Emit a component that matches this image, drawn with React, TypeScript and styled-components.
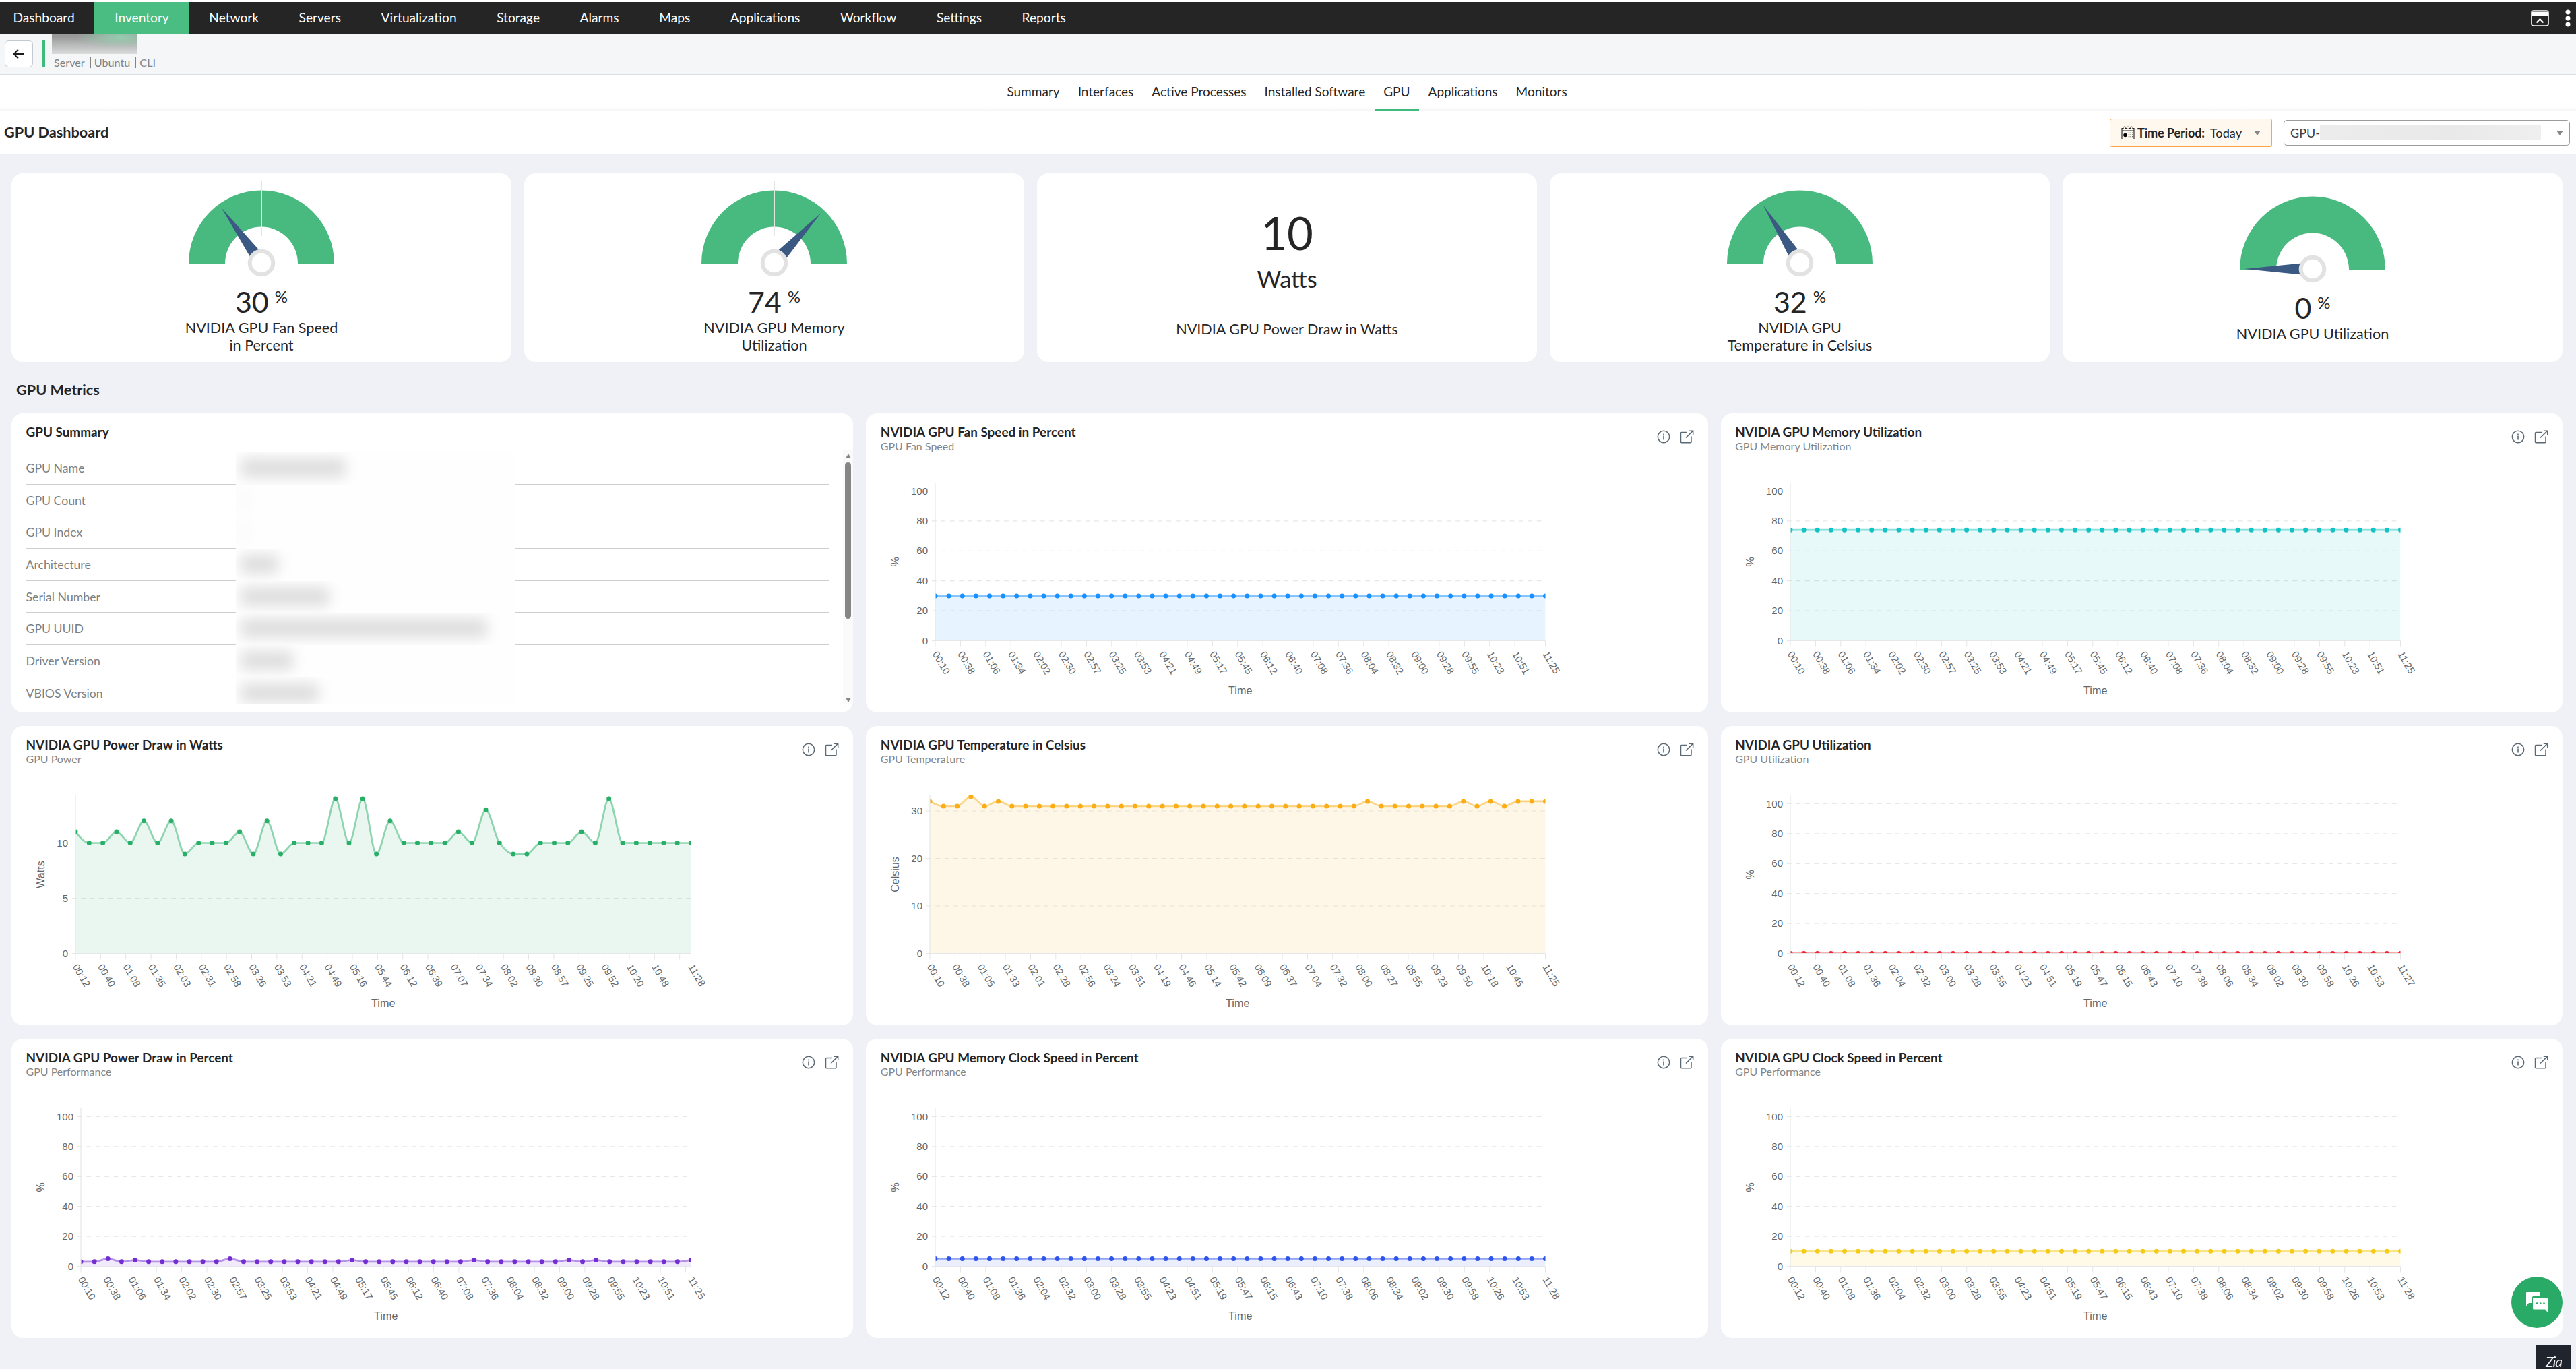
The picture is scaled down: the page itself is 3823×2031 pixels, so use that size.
import styled, { createGlobalStyle } from 'styled-components'

const GlobalStyle = createGlobalStyle`
  * {
    box-sizing: border-box;
  }
  body {
    margin: 0;
    background: #f0f1f6;
    font-family: Lato, 'Liberation Sans', sans-serif;
    color: #252525;
  }
`

const SPage = styled.div`
  height: 2031px;
  overflow: hidden;
  display: flex;
  flex-direction: column;
`

const STopLine = styled.div`
  height: 3px;
  flex: none;
  border-top: 1px solid #fff;
  border-bottom: 1px solid #fff;
  background: #b9bdc0;
`

const SNav = styled.nav`
  height: 47px;
  flex: none;
  background: #252525;
  display: flex;
  align-items: stretch;
  justify-content: space-between;
`

const SNavList = styled.div`
  display: flex;
`

const SNavItem = styled.a<{ $active?: boolean; $first?: boolean }>`
  display: flex;
  align-items: center;
  padding: 0 29.8px 2px ${(p) => (p.$first ? '19.5px' : '29.8px')};
  font-size: 19.15px;
  color: #fff;
  background: ${(p) => (p.$active ? '#4abd82' : 'transparent')};
`

const SNavTools = styled.div`
  display: flex;
  align-items: center;
  gap: 24px;
  padding-right: 8px;
`

const SHostBar = styled.header`
  height: 61px;
  flex: none;
  background: #f5f6f8;
  border-bottom: 1px solid #dcdee1;
  display: flex;
  padding-left: 7px;
`

const SBackButton = styled.button`
  width: 42px;
  height: 40px;
  margin-top: 10px;
  padding: 0;
  background: #fff;
  border: 1px solid #c3cad1;
  border-radius: 6px;
  display: flex;
  align-items: center;
  justify-content: center;
`

const SAccent = styled.div`
  width: 4px;
  height: 40px;
  margin: 10px 10px 0 14px;
  background: #3fbb7d;
`

const SHostInfo = styled.div`
  padding-top: 1px;
`

const SHostName = styled.div`
  width: 127px;
  height: 29px;
  background: radial-gradient(
      ellipse at 80% 15%,
      rgba(150, 208, 176, 0.95),
      rgba(150, 208, 176, 0) 45%
    ),
    linear-gradient(#989898 10%, #dadbdb);
`

const SHostMeta = styled.div`
  display: flex;
  margin: 4px 0 0 3px;
  font-size: 16.2px;
  line-height: 18px;
  color: #818588;

  span + span {
    margin-left: 8px;
    padding-left: 5px;
    border-left: 1px solid #818588;
    line-height: 18px;
    height: 17px;
  }
`

const STabs = styled.div`
  height: 54px;
  flex: none;
  background: linear-gradient(#fff 90%, #f6f6f6);
  border-bottom: 1px solid #cacaca;
  display: flex;
  justify-content: center;
  padding-right: 3px;
`

const STab = styled.a<{ $active?: boolean }>`
  display: flex;
  align-items: center;
  padding: 0 13.5px 2px;
  font-size: 19.05px;
  border-bottom: 3px solid ${(p) => (p.$active ? '#3fbb7d' : 'transparent')};
`

const STitleBar = styled.div`
  height: 64px;
  flex: none;
  background: #fff;
  display: flex;
  align-items: center;
  justify-content: space-between;
  padding: 0 9px 0 6px;
`

const SHeading = styled.h1`
  margin: 0;
  font-size: 21.7px;
  line-height: 28px;
  font-weight: 700;
`

const SPageTitle = styled(SHeading)`
  padding-bottom: 2px;
`

const SFilters = styled.div`
  display: flex;
  align-items: center;
  gap: 17px;
`

const SPeriod = styled.div`
  width: 241px;
  height: 42px;
  border: 1px solid #ffa53d;
  border-radius: 3px;
  background: #fff8ee;
  display: flex;
  align-items: center;
  padding: 0 16px;
  font-size: 18.2px;

  b {
    margin: 0 8px 0 4px;
    letter-spacing: -0.2px;
  }
`

const SSelect = styled.div`
  width: 425px;
  height: 38px;
  border: 1px solid #9c9c9c;
  border-radius: 5px;
  display: flex;
  align-items: center;
  padding: 0 9px;
  font-size: 18px;
  color: #3c3c3c;
`

const SMasked = styled.div`
  width: 328px;
  height: 22px;
  background: linear-gradient(90deg, #ececec, #e9e9e9 60%, #efefef);
`

const SCaret = styled.i`
  margin-left: auto;
  border: 5px solid transparent;
  border-top: 7px solid #868686;
  border-bottom: 0;
`

const SStatRow = styled.section`
  margin: 28px 20px 0 17px;
  display: grid;
  grid-template-columns: repeat(5, 1fr);
  gap: 19px;
`

const SCard = styled.div`
  background: #fff;
  border-radius: 17px;
  overflow: hidden;
`

const SStatCard = styled(SCard)<{ $top: number }>`
  height: 280px;
  padding-top: ${(p) => p.$top}px;
  display: flex;
  flex-direction: column;
  align-items: center;
  text-align: center;
`

const SGaugeValue = styled.div`
  display: flex;
  align-items: flex-start;
  margin-top: 8px;
  font-size: 43px;
  line-height: 50px;

  sup {
    margin-left: 9px;
    font-size: 24px;
    line-height: 33px;
  }
`

const SStatLabel = styled.div`
  font-size: 21.6px;
  line-height: 26px;
  white-space: pre-line;
`

const SBigValue = styled.div`
  font-size: 67px;
  line-height: 80px;
`

const SBigUnit = styled.div`
  margin: 7px 0 39px;
  font-size: 34.5px;
  line-height: 44px;
`

const SMetricsTitle = styled(SHeading)`
  margin: 27px 0 21px 24px;
`

const SMetricsGrid = styled.section`
  margin: 0 20px 0 17px;
  display: grid;
  grid-template-columns: repeat(3, 1fr);
  grid-auto-rows: 444px;
  gap: 20px 19px;
`

const SCardHead = styled.div`
  height: 60px;
  padding: 16px 21px 0 21.5px;
  display: flex;
  justify-content: space-between;
`

const SCardTitle = styled.div`
  font-size: 18.9px;
  line-height: 23px;
  font-weight: 700;
`

const SCardSub = styled.div`
  font-size: 16px;
  line-height: 19px;
  color: #83878a;
`

const SCardTools = styled.div`
  display: flex;
  gap: 14px;
  padding-top: 9px;
`

const SSummaryBody = styled.div`
  margin-top: -5px;
  height: 377px;
  display: flex;
`

const SSummaryRows = styled.div`
  flex: 1;
  padding: 3px 21px 0 21.5px;
  overflow: hidden;
`

const SSummaryRow = styled.div`
  height: 47.7px;
  display: flex;
  border-bottom: 1px solid #cfcfcf;
  font-size: 17.7px;
  line-height: 48px;
  color: #7b7f82;
`

const SSummaryLabel = styled.div`
  width: 311px;
`

const SSummaryMask = styled.div`
  width: 415px;
  height: 48px;
  background: #fefefe;
  overflow: hidden;
  padding: 9px 0 0 7px;
`

const SSmudge = styled.div<{ $w: number; $faint?: boolean }>`
  width: ${(p) => p.$w}px;
  height: 28px;
  border-radius: 8px;
  background: ${(p) => (p.$faint ? '#f3f3f3' : '#dddddd')};
  filter: blur(10px);
`

const SScroll = styled.div`
  width: 15px;
  background: #fafafa;
  display: flex;
  flex-direction: column;
  align-items: center;
  padding: 5px 0 3px;
`

const SScrollThumb = styled.div`
  width: 9px;
  height: 232px;
  margin: 6px 0 auto;
  border-radius: 5px;
  background: #868686;
`

const SArrow = styled.i<{ $up?: boolean }>`
  border: 4.5px solid transparent;
  border-top: ${(p) => (p.$up ? '0' : '7px solid #868686')};
  border-bottom: ${(p) => (p.$up ? '7px solid #868686' : '0')};
`

const SChat = styled.button`
  position: fixed;
  left: 3727px;
  top: 1894px;
  width: 76px;
  height: 76px;
  padding: 0;
  border: 0;
  border-radius: 50%;
  background: #29ab67;
  display: flex;
  align-items: center;
  justify-content: center;
`

const SZia = styled.div`
  position: fixed;
  left: 3764px;
  top: 1995px;
  width: 52px;
  height: 36px;
  background: #20242c;
  border-top: 1px solid #8b8d90;
  color: #f2f2f2;
  font-size: 21px;
  font-style: italic;
  line-height: 48px;
  text-align: center;
  letter-spacing: -1px;

  &::before {
    content: '';
    position: absolute;
    left: 0;
    right: 0;
    top: 5px;
    border-top: 1px dotted #5c6065;
  }
`

const navItems = [
  'Dashboard',
  'Inventory',
  'Network',
  'Servers',
  'Virtualization',
  'Storage',
  'Alarms',
  'Maps',
  'Applications',
  'Workflow',
  'Settings',
  'Reports',
]

const tabs = [
  'Summary',
  'Interfaces',
  'Active Processes',
  'Installed Software',
  'GPU',
  'Applications',
  'Monitors',
]

const summaryRows = [
  { label: 'GPU Name', w: 156 },
  { label: 'GPU Count', w: 8, faint: true },
  { label: 'GPU Index', w: 8, faint: true },
  { label: 'Architecture', w: 56 },
  { label: 'Serial Number', w: 132 },
  { label: 'GPU UUID', w: 366 },
  { label: 'Driver Version', w: 78 },
  { label: 'VBIOS Version', w: 116 },
]

const POINTS = 46

// a flat series with a few samples that differ
const series = (base: number, diff: Record<number, number> = {}) =>
  Array.from({ length: POINTS }, (_, i) => diff[i] ?? base)

const timesA =
  '00:10 00:38 01:06 01:34 02:02 02:30 02:57 03:25 03:53 04:21 04:49 05:17 05:45 06:12 06:40 07:08 07:36 08:04 08:32 09:00 09:28 09:55 10:23 10:51 11:25'
const timesB =
  '00:12 00:40 01:08 01:36 02:04 02:32 03:00 03:28 03:55 04:23 04:51 05:19 05:47 06:15 06:43 07:10 07:38 08:06 08:34 09:02 09:30 09:58 10:26 10:53'
const timesWatts =
  '00:12 00:40 01:08 01:35 02:03 02:31 02:58 03:26 03:53 04:21 04:49 05:16 05:44 06:12 06:39 07:07 07:34 08:02 08:30 08:57 09:25 09:52 10:20 10:48 11:28'
const timesTemp =
  '00:10 00:38 01:05 01:33 02:01 02:28 02:56 03:24 03:51 04:19 04:46 05:14 05:42 06:09 06:37 07:04 07:32 08:00 08:27 08:55 09:23 09:50 10:18 10:45 11:25'

interface IChart {
  title: string
  sub: string
  unit: string
  color: string
  data: number[]
  times: string
  ticks: number[]
  perUnit: number
  left: number
  step: number
}

const percent = {
  unit: '%',
  ticks: [0, 20, 40, 60, 80, 100],
  perUnit: 2.22,
  left: 103,
  step: 0.0413,
}

const charts: IChart[] = [
  {
    ...percent,
    title: 'NVIDIA GPU Fan Speed in Percent',
    sub: 'GPU Fan Speed',
    color: '#1890ff',
    data: series(30),
    times: timesA,
  },
  {
    ...percent,
    title: 'NVIDIA GPU Memory Utilization',
    sub: 'GPU Memory Utilization',
    color: '#13c2c2',
    data: series(74),
    times: timesA,
  },
  {
    title: 'NVIDIA GPU Power Draw in Watts',
    sub: 'GPU Power',
    unit: 'Watts',
    color: '#27ae67',
    data: [
      11, 10, 10, 11, 10, 12, 10, 12, 9, 10, 10, 10, 11, 9, 12, 9, 10, 10, 10,
      14, 10, 14, 9, 12, 10, 10, 10, 10, 11, 10, 13, 10, 9, 9, 10, 10, 10, 11,
      10, 14, 10, 10, 10, 10, 10, 10,
    ],
    times: timesWatts,
    ticks: [0, 5, 10],
    perUnit: 16.4,
    left: 95,
    step: 0.0409,
  },
  {
    title: 'NVIDIA GPU Temperature in Celsius',
    sub: 'GPU Temperature',
    unit: 'Celsius',
    color: '#faad14',
    data: series(31, {
      0: 32, 3: 33, 5: 32, 32: 32, 39: 32, 41: 32, 43: 32, 44: 32, 45: 32,
    }),
    times: timesTemp,
    ticks: [0, 10, 20, 30],
    perUnit: 7.05,
    left: 95,
    step: 0.0409,
  },
  {
    ...percent,
    title: 'NVIDIA GPU Utilization',
    sub: 'GPU Utilization',
    color: '#f5222d',
    data: series(0),
    times: timesB + ' 11:27',
  },
  {
    ...percent,
    title: 'NVIDIA GPU Power Draw in Percent',
    sub: 'GPU Performance',
    color: '#722ed1',
    data: series(3, { 2: 5, 4: 4, 11: 5, 20: 4, 29: 4, 36: 4, 38: 4, 45: 4 }),
    times: timesA,
  },
  {
    ...percent,
    title: 'NVIDIA GPU Memory Clock Speed in Percent',
    sub: 'GPU Performance',
    color: '#2f54eb',
    data: series(5),
    times: timesB + ' 11:28',
  },
  {
    ...percent,
    title: 'NVIDIA GPU Clock Speed in Percent',
    sub: 'GPU Performance',
    color: '#f5cb18',
    data: series(10),
    times: timesB + ' 11:28',
  },
]

const RIGHT = 1008.5
const TOP = 103
const BOTTOM = 337.5

// monotone cubic through the points, so peaks never overshoot
const curve = (pts: number[][]) => {
  const n = pts.length
  const dx = pts[1][0] - pts[0][0]
  const slope = pts.slice(1).map((p, i) => (p[1] - pts[i][1]) / dx)
  const tan = pts.map((_, i) => {
    if (i === 0) return slope[0] * 1.5
    if (i === n - 1) return slope[n - 2]
    const a = slope[i - 1]
    const b = slope[i]
    return a * b <= 0 ? 0 : (2 * a * b) / (a + b)
  })
  return pts
    .map((p, i) => {
      if (i === 0) return `M${p[0]} ${p[1]}`
      const q = pts[i - 1]
      return `C${q[0] + dx / 3} ${q[1] + (tan[i - 1] * dx) / 3} ${
        p[0] - dx / 3
      } ${p[1] - (tan[i] * dx) / 3} ${p[0]} ${p[1]}`
    })
    .join('')
}

const AreaChart = ({ chart, id }: { chart: IChart; id: string }) => {
  const { left, color } = chart
  const width = RIGHT - left
  const y = (v: number) => BOTTOM - v * chart.perUnit
  const pts = chart.data.map((v, i) => [
    left + (i * width) / (POINTS - 1),
    y(v),
  ])
  const line = curve(pts)
  const times = chart.times.split(' ')
  const tickX = Array.from({ length: 25 }, (_, i) => left + i * chart.step * width)

  return (
    <svg
      width="1249"
      height="384"
      viewBox="0 60 1249 384"
      fontFamily="'Liberation Sans', Arial, sans-serif"
      fill="#62676c"
    >
      <clipPath id={id}>
        <rect x={left} y={TOP} width={width} height={BOTTOM - TOP} />
      </clipPath>
      {chart.ticks.map((t) => (
        <g key={t}>
          <line
            x1={left - 5}
            x2={t ? RIGHT : left}
            y1={y(t)}
            y2={y(t)}
            stroke="#e6e7e8"
            strokeWidth="1.2"
            strokeDasharray={t ? '6.7 6.7' : undefined}
          />
          <text x={left - 11} y={y(t) + 5} fontSize="15" textAnchor="end">
            {t}
          </text>
        </g>
      ))}
      <g clipPath={`url(#${id})`}>
        <path
          d={`${line}L${RIGHT} ${BOTTOM}L${left} ${BOTTOM}Z`}
          fill={color}
          fillOpacity="0.1"
        />
        <path
          d={line}
          fill="none"
          stroke={color}
          strokeOpacity="0.5"
          strokeWidth="2.7"
        />
        {pts.map((p, i) => (
          <circle key={i} cx={p[0]} cy={p[1]} r="3.5" fill={color} />
        ))}
      </g>
      <path
        d={`M${left} ${TOP}V${BOTTOM}H${RIGHT}`}
        fill="none"
        stroke="#e6e7e8"
        strokeWidth="1.2"
      />
      {[...tickX, RIGHT].map((x) => (
        <line key={x} x1={x} x2={x} y1={BOTTOM} y2={BOTTOM + 9} stroke="#e3e5e7" />
      ))}
      {times.map((t, i) => {
        const x = (i === 24 ? RIGHT : tickX[i]) - 4.5
        return (
          <text key={t} fontSize="14.6" transform={`translate(${x} 357) rotate(60)`}>
            {t}
          </text>
        )
      })}
      <text x={(left + RIGHT) / 2} y="417" fontSize="16.2" textAnchor="middle">
        Time
      </text>
      <text
        fontSize="16"
        textAnchor="middle"
        transform={`translate(48.5 220.5) rotate(-90)`}
      >
        {chart.unit}
      </text>
    </svg>
  )
}

const InfoIcon = () => (
  <svg width="20" height="20" viewBox="0 0 20 20" fill="none" stroke="#5b6975">
    <circle cx="10" cy="10" r="8.7" strokeWidth="1.5" />
    <path d="M10 8.6V14.4" strokeWidth="1.6" />
    <path d="M10 5.4V7.2" strokeWidth="1.6" />
  </svg>
)

const OpenIcon = () => (
  <svg width="21" height="20" viewBox="0 0 21 20" fill="none" stroke="#5b6975">
    <path
      d="M11 3.5H2.6Q1.5 3.5 1.5 4.6V17.6Q1.5 18.7 2.6 18.7H15.8Q17 18.7 17 17.6V9.5"
      strokeWidth="1.5"
    />
    <path d="M9 11.5L19.3 1.4M13.8 1.2H19.7V7" strokeWidth="1.5" />
  </svg>
)

const ChartCard = ({ chart, id }: { chart: IChart; id: string }) => (
  <SCard>
    <SCardHead>
      <div>
        <SCardTitle>{chart.title}</SCardTitle>
        <SCardSub>{chart.sub}</SCardSub>
      </div>
      <SCardTools>
        <InfoIcon />
        <OpenIcon />
      </SCardTools>
    </SCardHead>
    <AreaChart chart={chart} id={id} />
  </SCard>
)

const Gauge = ({ value }: { value: number }) => (
  <svg width="260" height="146" viewBox="-130 -122 260 146">
    <path
      d="M-108 0A108 108.5 0 0 1 108 0H54A54 54.5 0 0 0 -54 0Z"
      fill="#48ba7f"
    />
    <path d="M0.5 -122V-41" stroke="#e4e6e4" strokeWidth="1" />
    <g transform={`translate(0 -1) rotate(${value * 1.8 - 180})`}>
      <path d="M16 -8.5L101 0L16 8.5Z" fill="#3b5982" />
    </g>
    <circle cy="-1" r="17.3" fill="#fff" stroke="#e2e2e2" strokeWidth="6" />
  </svg>
)

const GaugeCard = ({ value, label, top = 12 }: any) => (
  <SStatCard $top={top}>
    <Gauge value={value} />
    <SGaugeValue>
      {value}
      <sup>%</sup>
    </SGaugeValue>
    <SStatLabel>{label}</SStatLabel>
  </SStatCard>
)

const App = () => {
  return (
    <SPage>
      <GlobalStyle />
      <STopLine />
      <SNav>
        <SNavList>
          {navItems.map((name, i) => (
            <SNavItem key={name} $first={i === 0} $active={name === 'Inventory'}>
              {name}
            </SNavItem>
          ))}
        </SNavList>
        <SNavTools>
          <svg width="27" height="24" viewBox="0 0 27 24" fill="none">
            <rect x="1" y="1" width="25" height="22" rx="3" stroke="#fff" strokeWidth="1.6" />
            <path d="M1 2.5H26V8H1Z" fill="#fff" />
            <path d="M8.5 18.5L13.5 13.2L18.5 18.5" stroke="#fff" strokeWidth="2" />
          </svg>
          <svg width="8" height="26" viewBox="0 0 8 26" fill="#fff">
            <circle cx="4" cy="4" r="3.5" />
            <circle cx="4" cy="13" r="3.5" />
            <circle cx="4" cy="22" r="3.5" />
          </svg>
        </SNavTools>
      </SNav>

      <SHostBar>
        <SBackButton>
          <svg width="18" height="16" viewBox="0 0 18 16" fill="none" stroke="#1c1c1c">
            <path d="M17 8H2M8 1.5L1.5 8L8 14.5" strokeWidth="1.8" />
          </svg>
        </SBackButton>
        <SAccent />
        <SHostInfo>
          <SHostName />
          <SHostMeta>
            <span>Server</span>
            <span>Ubuntu</span>
            <span>CLI</span>
          </SHostMeta>
        </SHostInfo>
      </SHostBar>

      <STabs>
        {tabs.map((t) => (
          <STab key={t} $active={t === 'GPU'}>
            {t}
          </STab>
        ))}
      </STabs>

      <STitleBar>
        <SPageTitle>GPU Dashboard</SPageTitle>
        <SFilters>
          <SPeriod>
            <svg width="20" height="20" viewBox="0 0 20 20" fill="none" stroke="#222">
              <path d="M1 19V3.5H19V19M1 7H19" strokeWidth="1.1" />
              <circle cx="4.5" cy="2.8" r="1.7" fill="#fff8ee" />
              <circle cx="10" cy="2.8" r="1.7" fill="#fff8ee" />
              <circle cx="15.5" cy="2.8" r="1.7" fill="#fff8ee" />
              <circle cx="6" cy="13.5" r="2.8" fill="#000" stroke="none" />
              <path
                d="M11.5 9.5V18M14.3 9.5V18M17 9.5V18"
                strokeWidth="1.4"
                strokeDasharray="1.4 1.3"
              />
            </svg>
            <b>Time Period:</b>
            Today
            <SCaret />
          </SPeriod>
          <SSelect>
            GPU-
            <SMasked />
            <SCaret />
          </SSelect>
        </SFilters>
      </STitleBar>

      <SStatRow>
        <GaugeCard value={30} label={'NVIDIA GPU Fan Speed\nin Percent'} />
        <GaugeCard value={74} label={'NVIDIA GPU Memory\nUtilization'} />
        <SStatCard $top={48}>
          <SBigValue>10</SBigValue>
          <SBigUnit>Watts</SBigUnit>
          <SStatLabel>NVIDIA GPU Power Draw in Watts</SStatLabel>
        </SStatCard>
        <GaugeCard value={32} label={'NVIDIA GPU\nTemperature in Celsius'} />
        <GaugeCard value={0} label="NVIDIA GPU Utilization" top={21} />
      </SStatRow>

      <SMetricsTitle as="h2">GPU Metrics</SMetricsTitle>

      <SMetricsGrid>
        <SCard>
          <SCardHead>
            <SCardTitle>GPU Summary</SCardTitle>
          </SCardHead>
          <SSummaryBody>
            <SSummaryRows>
              {summaryRows.map((row) => (
                <SSummaryRow key={row.label}>
                  <SSummaryLabel>{row.label}</SSummaryLabel>
                  <SSummaryMask>
                    <SSmudge $w={row.w} $faint={row.faint} />
                  </SSummaryMask>
                </SSummaryRow>
              ))}
            </SSummaryRows>
            <SScroll>
              <SArrow $up />
              <SScrollThumb />
              <SArrow />
            </SScroll>
          </SSummaryBody>
        </SCard>
        {charts.map((chart, i) => (
          <ChartCard key={chart.title} chart={chart} id={`plot${i}`} />
        ))}
      </SMetricsGrid>

      <SChat>
        <svg width="34" height="32" viewBox="0 0 34 32" fill="#fff">
          <path d="M1 2Q1 1 2 1H21Q22 1 22 2V7H12Q9.5 7 9.5 10V17H5L1 21.5Z" />
          <path d="M11 10.5Q11 9 12.5 9H31.5Q33 9 33 10.5V31L29 26.5H12.5Q11 26.5 11 25Z" />
          <g fill="#29ab67">
            <circle cx="17" cy="17.5" r="1.3" />
            <circle cx="22.3" cy="17.5" r="1.3" />
            <circle cx="27.5" cy="17.5" r="1.3" />
          </g>
        </svg>
      </SChat>
      <SZia>Zia</SZia>
    </SPage>
  )
}

export default App
